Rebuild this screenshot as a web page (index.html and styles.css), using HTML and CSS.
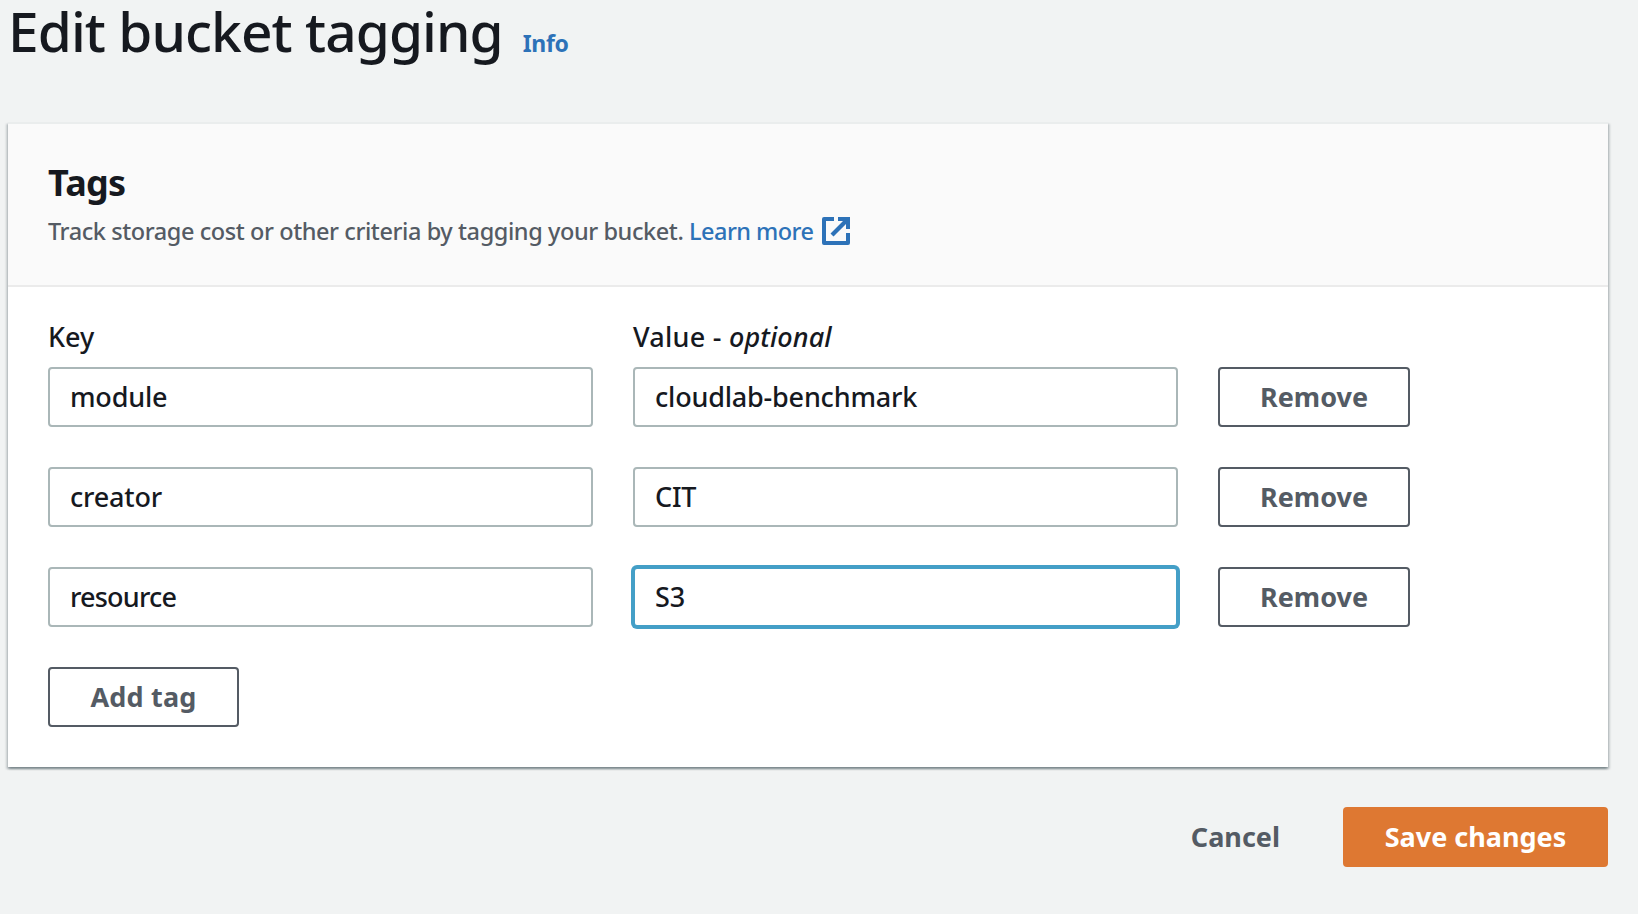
FILE: index.html
```
<!DOCTYPE html>
<html lang="en">
<head>
<meta charset="utf-8">
<title>Edit bucket tagging</title>
<link rel="stylesheet" href="styles.css">
</head>
<body>
<main class="page">
  <header class="page-header">
    <h1 class="page-title">Edit bucket tagging</h1>
    <a class="info-link">Info</a>
  </header>
  <section class="panel">
    <div class="panel-header">
      <h2 class="panel-title">Tags</h2>
      <p class="panel-desc"><span class="desc-text">Track storage cost or other criteria by tagging your bucket. </span><a class="learn-more">Learn more</a><svg class="external" viewBox="0 0 28 28" width="28" height="28"><path d="M12 2H2V26H26V16" fill="none" stroke="currentColor" stroke-width="4" stroke-linejoin="round"/><path d="M16 0H28V12H24V7L11.5 19.5 8.5 16.5 21 4H16Z" fill="currentColor"/></svg></p>
    </div>
    <div class="panel-body">
      <div class="labels">
        <label class="label">Key</label>
        <label class="label value-label"><span>Value - </span><em>optional</em></label>
      </div>
      <div class="rows">
        <div class="row"><div class="input">module</div><div class="input">cloudlab-benchmark</div><button class="button remove">Remove</button></div>
        <div class="row"><div class="input">creator</div><div class="input">CIT</div><button class="button remove">Remove</button></div>
        <div class="row"><div class="input tight">resource</div><div class="input focused">S3</div><button class="button remove">Remove</button></div>
        <button class="button add">Add tag</button>
      </div>
    </div>
  </section>
  <footer class="actions">
    <button class="cancel">Cancel</button>
    <button class="save">Save changes</button>
  </footer>
</main>
</body>
</html>
```
FILE: styles.css
```
* { box-sizing: border-box; }
body {
  margin: 0;
  background: #f1f3f3;
  color: #16191f;
  font-family: "Noto Sans", sans-serif;
  font-size: 27px;
}
h1, h2, p { margin: 0; }
button { font-family: inherit; font-size: inherit; font-weight: 700; padding: 0 0 2px; }
.page { width: 1600px; margin-left: 8px; }
.page-header { display: flex; align-items: baseline; height: 122px; }
.page-title { font-size: 55px; font-weight: 500; line-height: 62px; letter-spacing: -0.93px; white-space: nowrap; }
.info-link { margin-left: 20px; font-size: 23px; font-weight: 700; letter-spacing: -0.3px; color: #2d72b8; }
.panel {
  background: #fff;
  border-top: 2px solid #eaeded;
  box-shadow: 0 2px 2px 0 rgba(0, 28, 36, .3), 2px 2px 2px 0 rgba(0, 28, 36, .15), -2px 2px 2px 0 rgba(0, 28, 36, .15);
}
.panel-header { height: 163px; padding: 37px 40px 0; background: #fafafa; border-bottom: 2px solid #ebebeb; }
.panel-title { font-size: 36px; line-height: 44px; font-weight: 700; letter-spacing: -0.7px; }
.panel-desc { display: flex; align-items: center; margin-top: 4px; height: 44px; font-size: 23.5px; font-weight: 500; color: #545b64; white-space: pre; }
.desc-text { letter-spacing: -0.42px; }
.learn-more { color: #2d72b8; letter-spacing: -0.55px; }
.external { display: block; margin-left: 9px; color: #2d72b8; }
.panel-body { height: 480px; padding: 30px 40px 0; font-weight: 500; }
.labels { display: grid; grid-template-columns: 545px 545px; column-gap: 40px; line-height: 40px; margin-bottom: 10px; }
.value-label { white-space: pre; }
.value-label span { letter-spacing: 0.25px; }
.value-label em { letter-spacing: 0.1px; }
.rows { display: flex; flex-direction: column; gap: 40px; }
.row { display: grid; grid-template-columns: 545px 545px 192px; column-gap: 40px; }
.input { height: 60px; padding: 0 20px; border: 2px solid #aab7b8; border-radius: 4px; line-height: 55px; letter-spacing: -0.2px; background: #fff; }
.tight { letter-spacing: -0.8px; }
.focused { border-color: #449fc7; box-shadow: 0 0 0 2px #449fc7; }
.button { height: 60px; background: #fff; border: 2px solid #545b64; border-radius: 4px; color: #545b64; }
.add { width: 191px; letter-spacing: 0.2px; }
.actions { display: flex; justify-content: flex-end; margin-top: 40px; }
.cancel { height: 60px; border: 0; background: none; color: #545b64; margin-right: 63px; }
.save { width: 265px; height: 60px; border: 0; border-radius: 4px; background: #de7832; color: #fff; }
```
